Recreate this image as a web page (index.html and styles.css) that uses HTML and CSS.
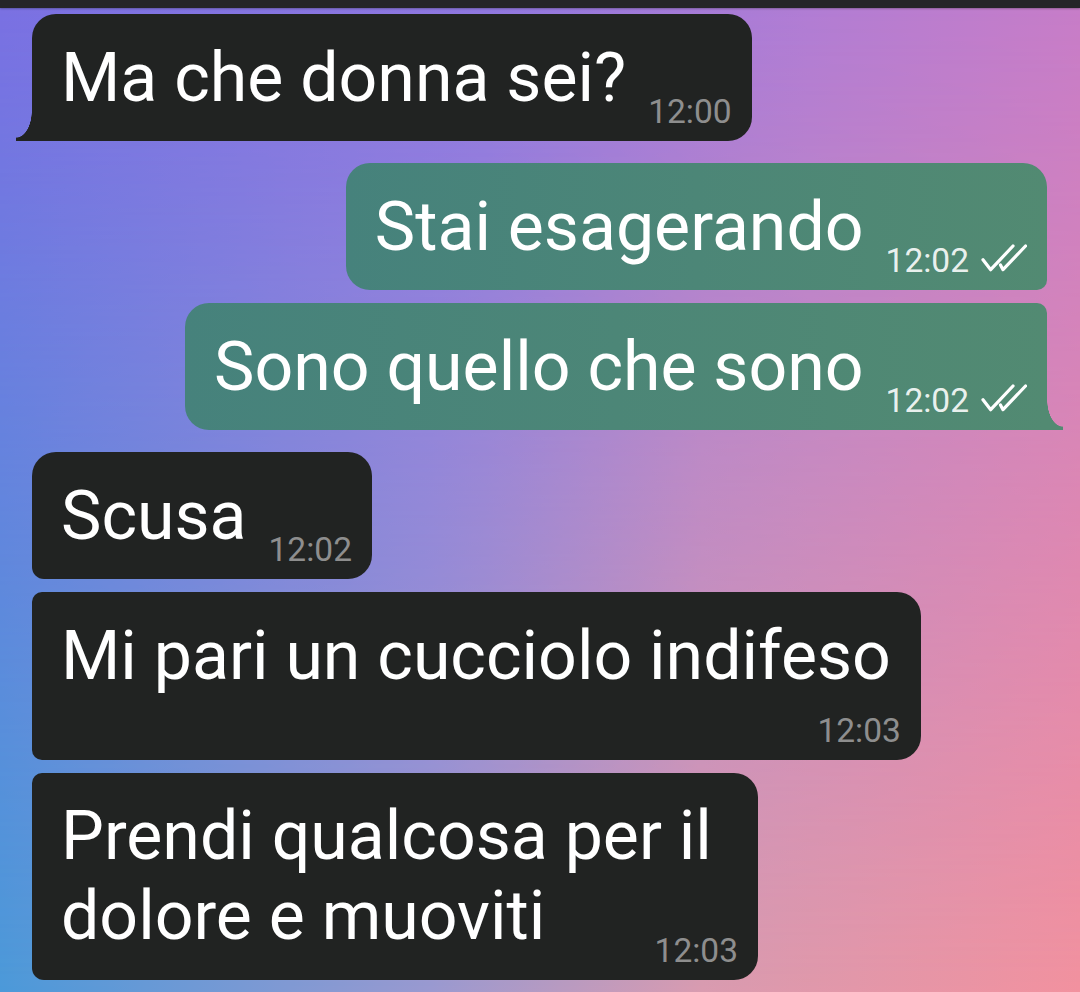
FILE: index.html
```html
<!DOCTYPE html>
<html lang="it">
<head>
    <meta charset="UTF-8">
    <meta name="viewport" content="width=device-width, initial-scale=1.0">
    <title>Chat</title>
    <link rel="stylesheet" href="styles.css">
</head>
<body>

    <div class="topbar"></div>

    <main class="chat">
        <div class="row in">
            <div class="msg msg-in tail-left">Ma che donna sei?<span class="time">12:00</span></div>
        </div>

        <div class="row out">
            <div class="msg msg-out first-out">Stai esagerando<span class="time">12:02<svg class="check" viewBox="0 0 46 28" width="46" height="28"><path d="M2 15.7 L9.7 25.7 L32 2"/><path d="M19.5 21 L22 25.7 L44.5 2"/></svg></span></div>
        </div>
        <div class="row out grouped">
            <div class="msg msg-out last-out tail-right">Sono quello che sono<span class="time">12:02<svg class="check" viewBox="0 0 46 28" width="46" height="28"><path d="M2 15.7 L9.7 25.7 L32 2"/><path d="M19.5 21 L22 25.7 L44.5 2"/></svg></span></div>
        </div>

        <div class="row in">
            <div class="msg msg-in first-in">Scusa<span class="time">12:02</span></div>
        </div>
        <div class="row in grouped">
            <div class="msg msg-in mid-in time-below">Mi pari un cucciolo indifeso<span class="time">12:03</span></div>
        </div>
        <div class="row in grouped">
            <div class="msg msg-in last-in narrow">Prendi qualcosa per il dolore e muoviti<span class="time">12:03</span></div>
        </div>
    </main>

</body>
</html>
```

FILE: styles.css
```css
body, html {
    margin: 0;
    padding: 0;
    height: 100%;
    overflow: hidden;
    font-family: Roboto, 'Noto Sans', sans-serif;
}

body {
    position: relative;
    background: linear-gradient(to right, #4c9ad9 0%, #9a9ad0 40%, #d99cb0 65%, #f2929f 100%);
}

/* top layer of the wallpaper, faded out towards the bottom */
body::before {
    content: '';
    position: absolute;
    top: 0;
    left: 0;
    width: 100%;
    height: 100%;
    background: linear-gradient(to right, #7a70e2 0%, #9077e0 45%, #b07cd4 75%, #c67cc8 100%);
    -webkit-mask-image: linear-gradient(to bottom, #000 0%, rgba(0, 0, 0, 0.55) 45%, transparent 100%);
    mask-image: linear-gradient(to bottom, #000 0%, rgba(0, 0, 0, 0.55) 45%, transparent 100%);
    z-index: 0;
}

.topbar {
    position: relative;
    z-index: 1;
    height: 8px;
    background-color: #252528;
    box-shadow: 0 1px 2px rgba(0, 0, 0, 0.25);
}

.chat {
    position: relative;
    z-index: 1;
    padding-top: 6px;
}

.row {
    display: flex;
    margin-top: 22px;
}

.row:first-child {
    margin-top: 0;
}

.row.grouped {
    margin-top: 13px;
}

.row.in {
    justify-content: flex-start;
    padding-left: 32px;
}

.row.out {
    justify-content: flex-end;
    padding-right: 33px;
}

.msg {
    position: relative;
    box-sizing: border-box;
    max-width: 900px;
    padding: 23.5px 20px 9px 29px;
    border-radius: 24px;
    font-size: 68px;
    line-height: 80px;
    color: #ffffff;
}

.msg-in {
    background-color: #212322;
}

.msg-out {
    background: linear-gradient(to right, #46827c, #528a72);
}

.time {
    float: right;
    margin-top: 54.5px;
    margin-left: 22px;
    font-size: 33.5px;
    line-height: 40px;
    color: #8e8e8e;
}

.msg-out .time {
    color: rgba(255, 255, 255, 0.9);
}

.check {
    margin-left: 12px;
    vertical-align: baseline;
    fill: none;
    stroke: #ffffff;
    stroke-width: 3.2;
    stroke-linecap: round;
    stroke-linejoin: round;
}

.time-below {
    padding-right: 30px;
}

.time-below .time {
    float: none;
    display: block;
    text-align: right;
    margin-top: 15px;
    margin-right: -10px;
}

.narrow {
    max-width: 726px;
}

/* corners of grouped bubbles */
.first-out {
    border-bottom-right-radius: 10px;
}

.last-out {
    border-top-right-radius: 10px;
}

.first-in {
    border-bottom-left-radius: 12px;
}

.mid-in {
    border-top-left-radius: 10px;
    border-bottom-left-radius: 10px;
}

.last-in {
    border-top-left-radius: 10px;
    border-bottom-left-radius: 12px;
}

/* bubble tails */
.tail-left {
    border-bottom-left-radius: 0;
}

.tail-left::before {
    content: '';
    position: absolute;
    left: -16px;
    bottom: 0;
    width: 17px;
    height: 30px;
    background: radial-gradient(ellipse 16px 27px at 0 0, transparent 97%, #212322 100%);
}

.tail-right {
    border-bottom-right-radius: 0;
}

.tail-right::after {
    content: '';
    position: absolute;
    right: -16px;
    bottom: 0;
    width: 17px;
    height: 30px;
    background: radial-gradient(ellipse 16px 27px at 100% 0, transparent 97%, #528a72 100%);
}
```
